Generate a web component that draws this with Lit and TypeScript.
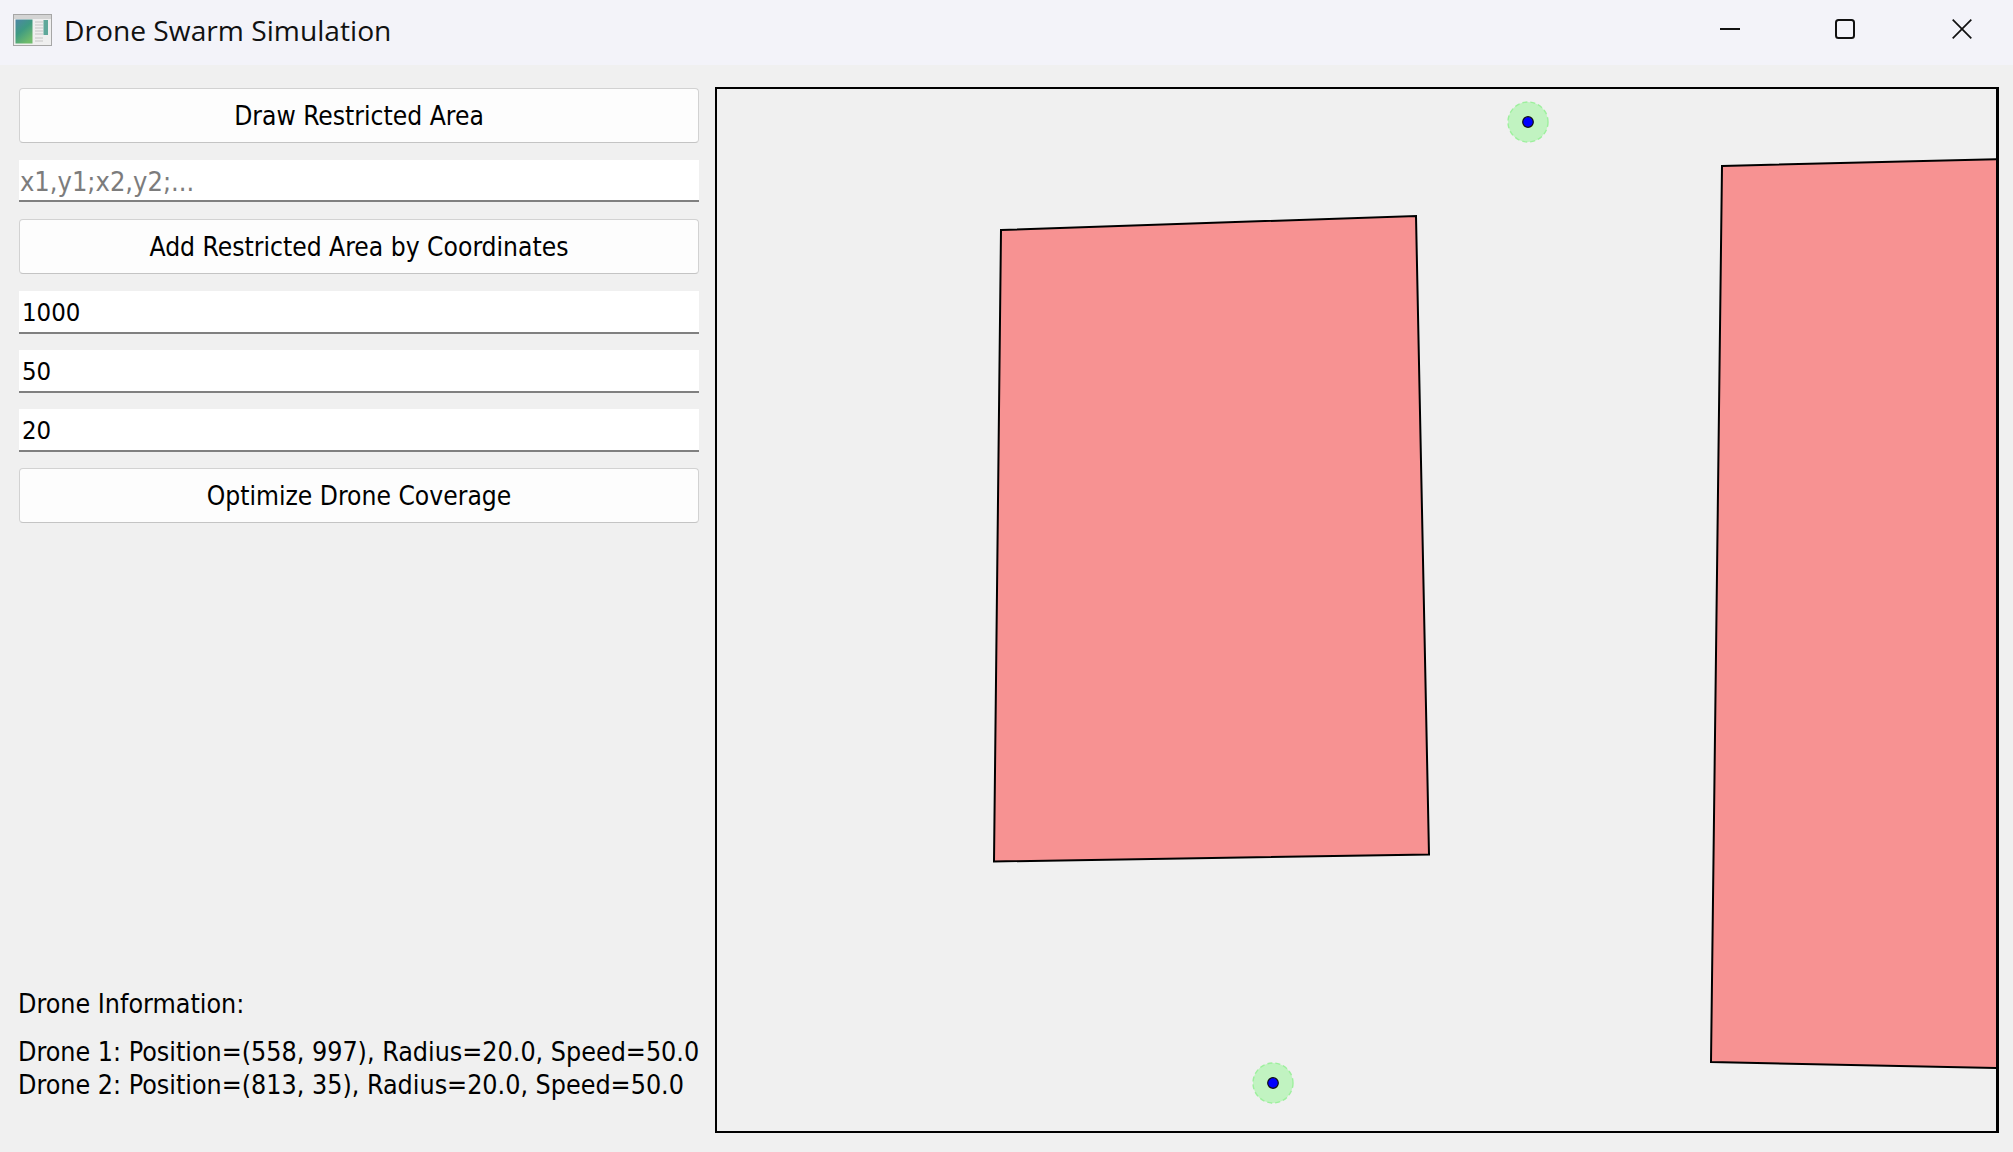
import { LitElement, html, css, svg } from "lit";
import { customElement } from "lit/decorators.js";

const drones = [
  { x: 556, y: 994 },
  { x: 811, y: 33 },
];
const areas = [
  "284,141 699,127 712,765.5 277,772.5",
  "1005,77 1285,70 1285,979 994,973",
];

@customElement("app-root")
export class AppRoot extends LitElement {
  static styles = css`
    :host {
      display: flex;
      flex-direction: column;
      width: 2013px;
      height: 1152px;
      background: #f0f0f0;
      color: #000;
      font-family: "DejaVu Sans Condensed", "Liberation Sans", Arial, sans-serif;
      font-size: 26.2px;
      overflow: hidden;
    }
    .titlebar {
      height: 65px;
      flex: none;
      background: #f3f3f9;
      display: flex;
      align-items: center;
      padding-left: 13px;
    }
    .app-icon { width: 39px; height: 32px; margin-right: 12px; margin-top: -6px; flex: none; }
    .title {
      font-family: "Open Sans", sans-serif;
      font-size: 28.2px;
      flex: 1;
      color: #111;
      margin-top: -6px;
    }
    .controls { display: flex; align-items: center; margin-top: -8px; margin-right: 41px; gap: 95px; }
    .controls svg { display: block; width: 20px; height: 20px; }
    .controls svg:last-child { margin-left: 2px; }
    .main {
      flex: 1;
      display: flex;
      padding: 22px 14px 19px 19px;
      gap: 16px;
      min-height: 0;
    }
    .side {
      width: 680px;
      flex: none;
      display: flex;
      flex-direction: column;
      gap: 17px;
      padding-top: 1px;
    }
    .btn {
      height: 55px;
      box-sizing: border-box;
      border: 1.5px solid #d2d2d2;
      border-bottom-color: #c4c4c4;
      border-radius: 4px;
      background: #fdfdfd;
      display: flex;
      align-items: center;
      justify-content: center;
      padding-top: 1px;
    }
    .field {
      height: 42.5px;
      box-sizing: border-box;
      background: #fff;
      border-bottom: 2px solid #808080;
      display: flex;
      align-items: center;
      padding-left: 3px;
      padding-top: 2px;
      line-height: 1;
      font-size: 25.5px;
    }
    .field.ph { height: 42px; color: #7c7c7c; padding-left: 1px; font-size: 27px; }
    .group { display: flex; flex-direction: column; gap: 16.5px; }
    .info {
      margin-top: auto;
      margin-left: -1px;
      display: flex;
      flex-direction: column;
      padding-bottom: 32px;
      white-space: nowrap;
      font-size: 26.6px;
    }
    .info .head { margin-bottom: 16px; }
    .info .line { height: 33px; line-height: 33px; }
    .canvas {
      flex: 1;
      box-sizing: border-box;
      border: 2px solid #000;
      border-right-width: 3px;
      background: #f0f0f0;
      position: relative;
      overflow: hidden;
    }
    .canvas svg { position: absolute; left: 0; top: 0; width: 100%; height: 100%; display: block; }
  `;

  render() {
    return html`
      <div class="titlebar">
        <svg class="app-icon" viewBox="0 0 39 32">
          <defs>
            <linearGradient id="g" x1="0" y1="0" x2="0.6" y2="1">
              <stop offset="0" stop-color="#4d86a6" />
              <stop offset="0.5" stop-color="#3e9a82" />
              <stop offset="1" stop-color="#6fbb6c" />
            </linearGradient>
          </defs>
          <rect x="0.5" y="0.5" width="38" height="31" fill="#efefef" stroke="#a6a6a6" />
          <rect x="1" y="1" width="37" height="4" fill="#d4d4d4" />
          <rect x="2.5" y="5.5" width="17" height="24" fill="url(#g)" />
          <path d="M22 8h8M22 11h8M22 14h8M22 17h8M22 20h8M22 24h8M22 27h8" stroke="#c6c6c6" stroke-width="1.2" />
          <rect x="30.5" y="6" width="4.5" height="15" fill="#5fa89a" />
        </svg>
        <div class="title">Drone Swarm Simulation</div>
        <div class="controls">
          <svg viewBox="0 0 20 20"><path d="M0 10h20" stroke="#111" stroke-width="2" /></svg>
          <svg viewBox="0 0 20 20"><rect x="1" y="1" width="18" height="18" rx="2.5" fill="none" stroke="#111" stroke-width="2" /></svg>
          <svg viewBox="0 0 20 20"><path d="M0.7 0.7 19.3 19.3M19.3 0.7 0.7 19.3" stroke="#111" stroke-width="1.7" fill="none" /></svg>
        </div>
      </div>
      <div class="main">
        <div class="side">
          <div class="btn">Draw Restricted Area</div>
          <div class="field ph">x1,y1;x2,y2;...</div>
          <div class="btn">Add Restricted Area by Coordinates</div>
          <div class="group">
            <div class="field">1000</div>
            <div class="field">50</div>
            <div class="field">20</div>
            <div class="btn">Optimize Drone Coverage</div>
          </div>
          <div class="info">
            <div class="head">Drone Information:</div>
            <div class="line">Drone 1: Position=(558, 997), Radius=20.0, Speed=50.0</div>
            <div class="line">Drone 2: Position=(813, 35), Radius=20.0, Speed=50.0</div>
          </div>
        </div>
        <div class="canvas">
          <svg xmlns="http://www.w3.org/2000/svg">
            ${areas.map(
              (p) => svg`<polygon points=${p} fill="#f79292" stroke="#000" stroke-width="2" />`
            )}
            ${drones.map(
              (d) => svg`
                <circle cx=${d.x} cy=${d.y} r="20" fill="#c1f3c1" stroke="#9df09d" stroke-width="1.4" stroke-dasharray="5 3" />
                <circle cx=${d.x} cy=${d.y} r="5.3" fill="#0000ff" stroke="#111" stroke-width="1.2" />
              `
            )}
          </svg>
        </div>
      </div>
    `;
  }
}
